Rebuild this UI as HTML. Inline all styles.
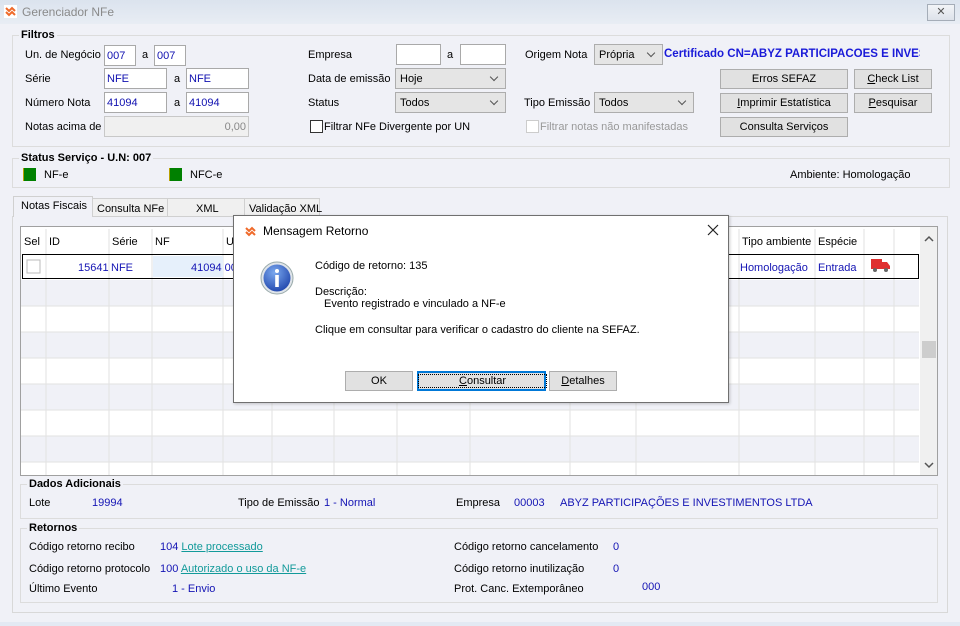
<!DOCTYPE html>
<html><head><meta charset="utf-8"><style>
*{box-sizing:border-box;margin:0;padding:0}
body{width:960px;height:626px;overflow:hidden;background:#f0f1f7;font-family:"Liberation Sans",Tahoma,sans-serif;font-size:11px;color:#000;position:relative}
.a{position:absolute;white-space:nowrap}
.in{position:absolute;background:#fff;border:1px solid #a9a9a9;height:21px;padding:4px 2px;color:#1010b0;font-size:11px}
.sel{position:absolute;background:#e5e5e5;border:1px solid #adadad;height:21px;padding:4px 4px}
.sel:after{content:"";position:absolute;right:8px;top:5px;width:5px;height:5px;border-right:1px solid #555;border-bottom:1px solid #555;transform:rotate(45deg)}
.btn{position:absolute;background:#e1e1e1;border:1px solid #adadad;text-align:center;padding-top:3px;height:20px}
.grp{position:absolute;border:1px solid #dcdcdc}
.gl{position:absolute;font-weight:bold;background:#f0f1f7;padding:0 2px;font-size:11px}
.b{color:#1414b4}
.lk{color:#129a9a;text-decoration:underline}
.cb{position:absolute;width:13px;height:13px;border:1px solid #333;background:#fff}
</style></head><body>
<div class="a" style="left:0;top:0;width:960px;height:24px;background:linear-gradient(#dbe3ee,#e8edf4)"></div>
<svg class="a" style="left:4px;top:5px" width="13" height="13"><rect width="13" height="13" fill="#fff"/><path d="M2 3l3 3 3-3 3 3M2 7l3 3 3-3 3 3" stroke="#ef6a2a" stroke-width="2" fill="none"/></svg>
<div class="a" style="left:22px;top:5px;color:#8a8a8a;font-size:12px">Gerenciador NFe</div>
<div class="a" style="left:927px;top:4px;width:28px;height:17px;border:1px solid #a5adb8;background:linear-gradient(#f2f4f7,#dde2ea);text-align:center;font-size:11px;color:#555;line-height:14px">✕</div>

<div class="grp" style="left:12px;top:35px;width:938px;height:112px"></div>
<div class="gl" style="left:19px;top:29px">Filtros</div>
<div class="a" style="left:25px;top:49px">Un. de Negócio</div>
<div class="in" style="left:104px;top:45px;width:32px">007</div><div class="a" style="left:142px;top:49px">a</div>
<div class="in" style="left:154px;top:45px;width:32px">007</div>
<div class="a" style="left:25px;top:73px">Série</div>
<div class="in" style="left:104px;top:68px;width:63px">NFE</div><div class="a" style="left:174px;top:73px">a</div>
<div class="in" style="left:186px;top:68px;width:63px">NFE</div>
<div class="a" style="left:25px;top:97px">Número Nota</div>
<div class="in" style="left:104px;top:92px;width:63px">41094</div><div class="a" style="left:174px;top:97px">a</div>
<div class="in" style="left:186px;top:92px;width:63px">41094</div>
<div class="a" style="left:25px;top:121px">Notas acima de</div>
<div class="in" style="left:104px;top:116px;width:145px;background:#f0f0f0;color:#888;text-align:right;border-color:#c8c8c8">0,00</div>

<div class="a" style="left:308px;top:49px">Empresa</div>
<div class="in" style="left:396px;top:44px;width:45px"></div><div class="a" style="left:447px;top:49px">a</div>
<div class="in" style="left:460px;top:44px;width:46px"></div>
<div class="a" style="left:308px;top:73px">Data de emissão</div>
<div class="sel" style="left:395px;top:68px;width:111px">Hoje</div>
<div class="a" style="left:308px;top:97px">Status</div>
<div class="sel" style="left:395px;top:92px;width:111px">Todos</div>
<div class="cb" style="left:310px;top:120px"></div>
<div class="a" style="left:324px;top:121px">Filtrar NFe Divergente por UN</div>

<div class="a" style="left:525px;top:49px">Origem Nota</div>
<div class="sel" style="left:594px;top:44px;width:69px">Própria</div>
<div class="a" style="left:664px;top:48px;color:#1a1ad8;font-weight:bold;width:256px;overflow:hidden;font-size:11.5px">Certificado CN=ABYZ PARTICIPACOES E INVESTIMENTOS</div>
<div class="a" style="left:524px;top:97px">Tipo Emissão</div>
<div class="sel" style="left:594px;top:92px;width:100px">Todos</div>
<div class="cb" style="left:526px;top:120px;border-color:#ccc"></div>
<div class="a" style="left:540px;top:121px;color:#999">Filtrar notas não manifestadas</div>

<div class="btn" style="left:720px;top:69px;width:128px">Erros SEFAZ</div>
<div class="btn" style="left:854px;top:69px;width:78px"><u>C</u>heck List</div>
<div class="btn" style="left:720px;top:93px;width:128px"><u>I</u>mprimir Estatística</div>
<div class="btn" style="left:854px;top:93px;width:78px"><u>P</u>esquisar</div>
<div class="btn" style="left:720px;top:117px;width:128px">Consulta Serviços</div>

<div class="grp" style="left:12px;top:158px;width:938px;height:30px"></div>
<div class="gl" style="left:19px;top:152px">Status Serviço - U.N: 007</div>
<div class="a" style="left:23px;top:168px;width:13px;height:13px;background:#008000;border-left:1px solid #b8a000"></div>
<div class="a" style="left:44px;top:169px">NF-e</div>
<div class="a" style="left:169px;top:168px;width:13px;height:13px;background:#008000;border-left:1px solid #b8a000"></div>
<div class="a" style="left:190px;top:169px">NFC-e</div>
<div class="a" style="left:790px;top:169px">Ambiente: Homologação</div>

<div class="a" style="left:12px;top:216px;width:936px;height:397px;border:1px solid #d8d8d8;background:#f0f1f7"></div>
<div class="a" style="left:92px;top:198px;width:228px;height:19px;border:1px solid #d0d0d0;background:#f0f0f0"></div>
<div class="a" style="left:167px;top:198px;width:1px;height:19px;background:#d0d0d0"></div>
<div class="a" style="left:244px;top:198px;width:1px;height:19px;background:#d0d0d0"></div>
<div class="a" style="left:97px;top:203px">Consulta NFe</div>
<div class="a" style="left:196px;top:203px">XML</div>
<div class="a" style="left:249px;top:203px">Validação XML</div>
<div class="a" style="left:13px;top:196px;width:80px;height:21px;border:1px solid #d0d0d0;border-bottom:none;background:#f0f1f7;padding:3px 0 0 7px">Notas Fiscais</div>

<div class="a" style="left:20px;top:226px;width:918px;height:250px;border:1px solid #a0a0a0;background:#fff;overflow:hidden">
<svg width="918" height="250" style="position:absolute;left:0;top:0">
<g fill="#f0f1f7"><rect x="0" y="53" width="898" height="26"/><rect x="0" y="105" width="898" height="26"/><rect x="0" y="157" width="898" height="26"/><rect x="0" y="209" width="898" height="26"/></g>
<g stroke="#e2e2e2"><path d="M0 79H898M0 105H898M0 131H898M0 157H898M0 183H898M0 209H898M0 235H898"/>
<path d="M25 2V250M88 2V250M131 2V250M202 2V250M251 2V250M313 2V250M376 2V250M449 2V250M549 2V250M615 2V250M718 2V250M794 2V250M843 2V250M873 2V250"/></g>
<rect x="1.5" y="27.5" width="896" height="24" fill="none" stroke="#000"/>
<rect x="132" y="29" width="70" height="21" fill="#e6f0fb"/>
<rect x="6" y="33" width="13" height="13" fill="#fff" stroke="#bbb"/>
<rect x="899" y="0" width="19" height="250" fill="#f0f0f0"/>
<rect x="901" y="114" width="14" height="17" fill="#cdcdcd"/>
<path d="M904 14l4-4 4 4M904 236l4 4 4-4" stroke="#555" stroke-width="1.5" fill="none"/>
<g transform="translate(850,32)"><rect x="0" y="0" width="11" height="10" fill="#e03030"/><path d="M11 3h5l3 4v3h-8z" fill="#e03030"/><circle cx="4" cy="11" r="2" fill="#666"/><circle cx="15" cy="11" r="2" fill="#666"/></g>
</svg>
<div class="a" style="left:3px;top:9px">Sel</div><div class="a" style="left:28px;top:9px">ID</div>
<div class="a" style="left:91px;top:9px">Série</div><div class="a" style="left:134px;top:9px">NF</div>
<div class="a" style="left:205px;top:9px">U</div>
<div class="a" style="left:721px;top:9px">Tipo ambiente</div><div class="a" style="left:797px;top:9px">Espécie</div>
<div class="a b" style="left:57px;top:35px">15641</div><div class="a b" style="left:90px;top:35px">NFE</div>
<div class="a b" style="left:170px;top:35px">41094 00</div>
<div class="a b" style="left:719px;top:35px">Homologação</div><div class="a b" style="left:797px;top:35px">Entrada</div>
</div>

<div class="grp" style="left:20px;top:484px;width:918px;height:35px"></div>
<div class="gl" style="left:27px;top:478px">Dados Adicionais</div>
<div class="a" style="left:29px;top:497px">Lote</div><div class="a b" style="left:92px;top:497px">19994</div>
<div class="a" style="left:238px;top:497px">Tipo de Emissão</div><div class="a b" style="left:324px;top:497px">1 - Normal</div>
<div class="a" style="left:456px;top:497px">Empresa</div><div class="a b" style="left:514px;top:497px">00003</div>
<div class="a b" style="left:560px;top:497px">ABYZ PARTICIPAÇÕES E INVESTIMENTOS LTDA</div>

<div class="grp" style="left:20px;top:528px;width:918px;height:75px"></div>
<div class="gl" style="left:27px;top:522px">Retornos</div>
<div class="a" style="left:29px;top:541px">Código retorno recibo</div>
<div class="a" style="left:160px;top:541px"><span class="b">104</span> <span class="lk">Lote processado</span></div>
<div class="a" style="left:29px;top:563px">Código retorno protocolo</div>
<div class="a" style="left:160px;top:563px"><span class="b">100</span> <span class="lk">Autorizado o uso da NF-e</span></div>
<div class="a" style="left:29px;top:583px">Último Evento</div><div class="a b" style="left:172px;top:583px">1 - Envio</div>
<div class="a" style="left:454px;top:541px">Código retorno cancelamento</div><div class="a b" style="left:613px;top:541px">0</div>
<div class="a" style="left:454px;top:563px">Código retorno inutilização</div><div class="a b" style="left:613px;top:563px">0</div>
<div class="a" style="left:454px;top:583px">Prot. Canc. Extemporâneo</div><div class="a b" style="left:642px;top:581px">000</div>
<div class="a" style="left:0;top:622px;width:960px;height:4px;background:#e3e9f3"></div>

<div class="a" style="left:233px;top:215px;width:496px;height:188px;background:#fff;border:1px solid #707070;box-shadow:1px 1px 3px rgba(0,0,0,.2)">
<svg class="a" style="left:10px;top:9px" width="13" height="13"><rect width="13" height="13" fill="#fff"/><path d="M2 3l3 3 3-3 3 3M2 7l3 3 3-3 3 3" stroke="#ef6a2a" stroke-width="2" fill="none"/></svg>
<div class="a" style="left:29px;top:8px;font-size:12px">Mensagem Retorno</div>
<svg class="a" style="left:473px;top:8px" width="12" height="12"><path d="M1 1L11 11M11 1L1 11" stroke="#222" stroke-width="1.2"/></svg>
<svg class="a" style="left:26px;top:45px" width="34" height="34"><defs><radialGradient id="g" cx=".4" cy=".3" r=".8"><stop offset="0" stop-color="#7aa8ee"/><stop offset="1" stop-color="#1a3fa8"/></radialGradient></defs><circle cx="17" cy="17" r="16" fill="#dfe4ea" stroke="#9aa"/><circle cx="17" cy="17" r="13.5" fill="url(#g)"/><circle cx="17" cy="10" r="2" fill="#fff"/><rect x="15.2" y="14" width="3.6" height="12" fill="#fff"/></svg>
<div class="a" style="left:81px;top:44px">Código de retorno: 135</div>
<div class="a" style="left:81px;top:70px">Descrição:</div>
<div class="a" style="left:90px;top:82px">Evento registrado e vinculado a NF-e</div>
<div class="a" style="left:81px;top:108px">Clique em consultar para verificar o cadastro do cliente na SEFAZ.</div>
<div class="btn" style="left:111px;top:155px;width:68px;background:#e1e1e1">OK</div>
<div class="btn" style="left:183px;top:155px;width:129px;border:2px solid #0078d7;padding-top:2px"><span style="outline:1px dotted #000;padding:0 40px"><u>C</u>onsultar</span></div>
<div class="btn" style="left:315px;top:155px;width:68px"><u>D</u>etalhes</div>
</div>
</body></html>
